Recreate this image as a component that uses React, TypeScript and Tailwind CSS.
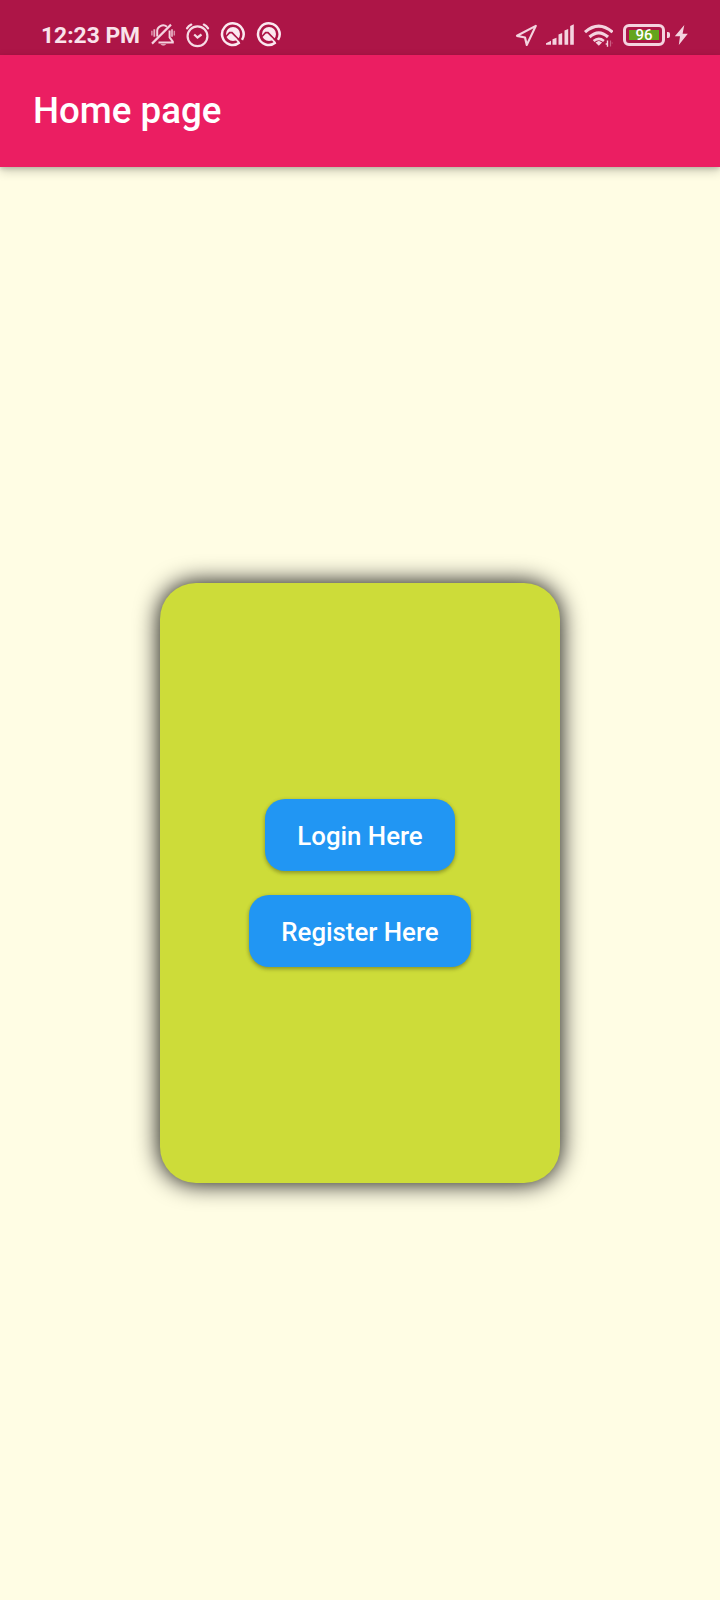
const BellOff = () => (
  <svg className="ml-[10px] h-[26px] w-[26px]" viewBox="150 22 26 26" fill="none" stroke="#f4d3df" strokeWidth="2">
    <path d="M157.2 36.5V32a6 6 0 0 1 9.8-5.2M169.6 30.5v6.8l3.2 4.4v.8H158.500" />
    <path d="M152 43.600 171 24.600" strokeWidth="2.200" />
    <path d="M160.300 44.200h6q-3 2.800-6 0z" fill="#f4d3df" stroke="none" />
    <path d="M154.300 29.300v7.500M172 29.300v7.500" strokeWidth="1.800" opacity=".8" />
    <path d="M151.900 30.700v4.700M174.300 30.700v4.700" strokeWidth="1.500" opacity=".65" />
  </svg>
)

const Alarm = () => (
  <svg className="ml-[8px] h-[26px] w-[26px]" viewBox="184 22 26 26" fill="none" stroke="#f6dbe5" strokeWidth="2.200" strokeLinecap="round">
    <circle cx="197.500" cy="36.200" r="9.900" />
    <path d="M187 28.300q1.500-2.400 4.300-3.700M203.800 24.600q2.800 1.300 4.300 3.700" />
    <path d="m194.200 34.500 3.300 3 4-3" strokeLinecap="butt" />
  </svg>
)

const QBadge = ({ className }: { className: string }) => (
  <svg className={`h-[26px] w-[26px] ${className}`} viewBox="0 0 26 26" fill="none">
    <path d="M19.600 21.600A10.800 10.800 0 1 1 22 18.900" stroke="#fbe9f0" strokeWidth="2.500" />
    <circle cx="13" cy="13" r="7" fill="#fbe9f0" />
    <path d="M6 15.500 9.600 11.700H12L21.500 21.500" stroke="#ad1547" strokeWidth="1.700" />
    <path d="m14.800 17 4.600 4.800" stroke="#fbe9f0" strokeWidth="1.700" />
  </svg>
)

const Location = () => (
  <svg className="h-[24px] w-[24px]" viewBox="515 23 24 24" fill="none" stroke="#f4d3df" strokeWidth="2.200" strokeLinejoin="round">
    <path d="M535.800 25.900 517 35.800l8 1.700 1.800 7.400z" />
  </svg>
)

const Signal = () => (
  <svg className="ml-[6px] h-[22px] w-[30px]" viewBox="545 24 30 22" fill="#f4d3df">
    <path d="M546 44.700v-1.500l5-2.500v4zM552.500 39.300l4-1.500v6.900h-4zM558.500 34.500l3.700-1.500v11.700h-3.700zM564.500 30.500l3.700-1.500v15.700h-3.700zM570.200 26l3.600-1.700v20.400h-3.600z" />
  </svg>
)

const Wifi = () => (
  <svg className="ml-[8px] h-[24px] w-[30px]" viewBox="583 23 30 24" fill="none" stroke="#f4d3df" strokeWidth="3.100">
    <path d="M585 32.200q13.700-12 27.500 0M589.500 37q9.200-8.400 18.500 0" />
    <path d="M593.600 41q5.100-4.300 10.300 0" strokeWidth="2.600" />
    <path d="m595.500 42.500 3.300-1.700 3.300 1.700-3.300 3.300z" fill="#f4d3df" stroke="none" />
    <path d="M607.500 40.500v6.300M605.700 44h2" strokeWidth="1.400" />
    <path d="M610.500 40.500v6M611.700 43h1" strokeWidth="1.200" opacity=".4" />
  </svg>
)

const Bolt = () => (
  <svg className="ml-[4px] h-[22px] w-[16px]" viewBox="674.500 24 16 22" fill="#f4d3df">
    <path d="m684.800 25-9.500 11.300h5.200L679.300 45l9-11.300h-5.200z" />
  </svg>
)

const button =
  'flex h-[72px] items-center justify-center rounded-[20px] bg-[#2196f3] pt-[2px] text-[25.800px] font-medium text-white shadow-[0_2px_4px_rgba(0,0,0,0.26),0_1px_4px_rgba(0,0,0,0.1)]'

export default function App() {
  return (
    <div className="flex h-[1600px] w-[720px] flex-col overflow-hidden bg-[#fffde4] font-['Roboto',sans-serif]">
      <div className="flex h-[55px] shrink-0 items-center bg-[#ad1547] pt-[15px] pr-[30px] pl-[41px]">
        <span className="w-[99px] pt-[2px] text-[22.800px] leading-[28px] font-bold whitespace-nowrap text-[#f9e3eb]">12:23 PM</span>
        <BellOff />
        <Alarm />
        <QBadge className="ml-[10px] -mt-[3px]" />
        <QBadge className="ml-[10px] -mt-[3px]" />
        <div className="ml-auto flex items-center">
          <Location />
          <Signal />
          <Wifi />
          <div className="ml-[10px] flex h-[22px] w-[42px] items-center justify-center rounded-[6px] border-[3px] border-[#f4d3df]">
            <span className="flex h-[10px] w-[30px] items-center justify-center bg-[#64a51c] text-[15px] leading-none font-medium text-white">96</span>
          </div>
          <div className="ml-[2px] h-[6px] w-[3px] rounded-r-[2px] bg-[#f4d3df]" />
          <Bolt />
        </div>
      </div>
      <header className="flex h-[112px] shrink-0 items-center bg-[#eb1e62] pl-[33px] shadow-[0_4px_10px_rgba(0,0,0,0.2),0_2px_4px_rgba(0,0,0,0.14)]">
        <h1 className="text-[36.700px] font-medium text-white">Home page</h1>
      </header>
      <main className="flex flex-1 items-center justify-center pb-px">
        <div className="flex h-[600px] w-[400px] flex-col items-center justify-center gap-[24px] rounded-[36px] bg-[#cddc39] shadow-[0_0_25px_#000]">
          <button className={`${button} w-[190px]`}>Login Here</button>
          <button className={`${button} w-[222px]`}>Register Here</button>
        </div>
      </main>
    </div>
  )
}
